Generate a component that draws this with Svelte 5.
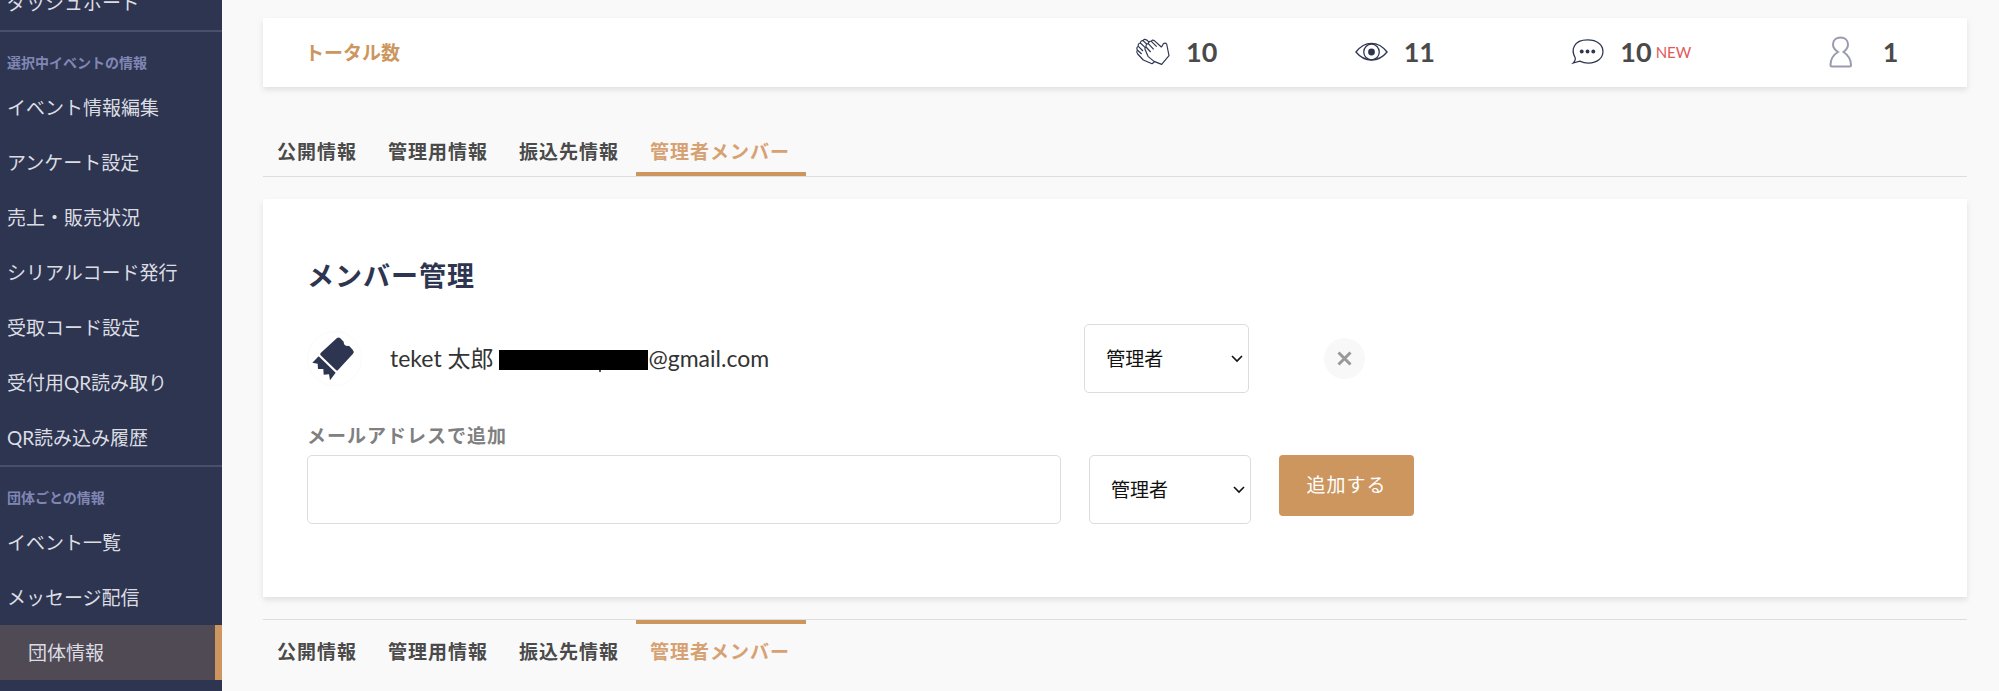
<script>
  const eventLinks = [
    "イベント情報編集",
    "アンケート設定",
    "売上・販売状況",
    "シリアルコード発行",
    "受取コード設定",
    "受付用QR読み取り",
    "QR読み込み履歴",
  ];

  const groupLinks = ["イベント一覧", "メッセージ配信", "団体情報"];

  const tabs = ["公開情報", "管理用情報", "振込先情報", "管理者メンバー"];

  const roles = ["管理者", "スタッフ"];

  let currentTab = $state("管理者メンバー");
  let memberRole = $state("管理者");
  let newRole = $state("管理者");
  let email = $state("");
</script>

{#snippet tabBar(position)}
  <nav class="tabs {position}">
    {#each tabs as tab}
      <button
        type="button"
        class="tab"
        class:active={tab === currentTab}
        onclick={() => (currentTab = tab)}>{tab}</button
      >
    {/each}
  </nav>
{/snippet}

{#snippet chevron()}
  <svg class="chevron" width="12" height="8" viewBox="0 0 12 8" aria-hidden="true">
    <path d="M1 1l5 5 5-5" />
  </svg>
{/snippet}

<div class="page">
  <aside class="sidebar">
    <a class="link" href="#dashboard">ダッシュボード</a>
    <section>
      <h2>選択中イベントの情報</h2>
      {#each eventLinks as link}
        <a class="link" href="#event">{link}</a>
      {/each}
    </section>
    <section>
      <h2>団体ごとの情報</h2>
      {#each groupLinks as link}
        <a class="link" class:selected={link === "団体情報"} href="#group">{link}</a>
      {/each}
    </section>
  </aside>

  <main>
    <div class="card totals">
      <p class="totals-title">トータル数</p>
      <div class="stats">
        <div class="stat">
          <svg width="34" height="28" viewBox="0 0 102 84" aria-hidden="true">
            <g class="line">
              <path d="M54 70L77 79L99 53L92 18Q88 13 82 17Q80 24 76 27L55 8Q49 4 46 10Q38 8 37 17Q29 17 30 27Q24 31 29 38L36 55Z" />
              <path d="M46 10L62 26M37 17L53 34M30 27L44 42" />
              <path d="M55 72L48 77L22 66L5 48Q0 42 4 36Q0 29 7 25Q5 16 13 15Q14 7 21 8Q25 1 32 6L40 13" />
              <path d="M4 36L17 48M7 25L21 39M13 15L28 29M21 8L32 18" />
            </g>
          </svg>
          <strong>10</strong>
        </div>
        <div class="stat">
          <svg width="33" height="20" viewBox="0 0 34 20" aria-hidden="true">
            <path class="line" d="M1 10C10-2 24-2 33 10C24 21 10 21 1 10Z" />
            <circle class="line" cx="17" cy="10" r="8" />
            <circle class="fill" cx="17" cy="10" r="3.5" />
          </svg>
          <strong>11</strong>
        </div>
        <div class="stat">
          <svg width="32" height="27" viewBox="0 0 33 28" aria-hidden="true">
            <path class="line" d="M3 20C-1 13 1 2 16 2C26 2 32 7 32 14C32 21 26 26 17 26C13 26 10 25 8 24L1 26C3 24 4 22 3 20Z" />
            <circle class="fill" cx="10" cy="14" r="2" />
            <circle class="fill" cx="16" cy="14" r="2" />
            <circle class="fill" cx="22" cy="14" r="2" />
          </svg>
          <strong>10</strong><span class="new">NEW</span>
        </div>
        <div class="stat">
          <svg width="38" height="32" viewBox="0 0 38 32" aria-hidden="true">
            <path class="person" d="M9 16C6 14 4 12 4 8.500C4 4 7.500 1.500 11.500 1.500C15.500 1.500 19 4 19 8.500C19 12 17 14 14.500 16C19 19 22 23 22 29Q22 30.500 20.500 30.500H3Q1.500 30.500 1.500 29C1.500 23 4 19 9 16Z" />
          </svg>
          <strong>1</strong>
        </div>
      </div>
    </div>

    {@render tabBar("top")}

    <div class="card members">
      <h1>メンバー管理</h1>
      <div class="member">
        <div class="identity">
          <div class="avatar">
            <svg width="43" height="43" viewBox="0 0 129 129" aria-hidden="true">
              <path d="M72 3Q77-1 82 4L92 14Q92 20 95 24Q101 28 108 26L119 38Q125 44 120 50L75 99Q72 102 69 99L23 55Q20 52 23 48Z" />
              <path d="M17 58L68 107L51 130L48 112L32 113L31 96L15 96L14 80L-2 77Z" />
            </svg>
          </div>
          <p class="name">teket 太郎 <span class="masked"></span>@gmail.com</p>
        </div>
        <div class="select member-role">
          <select aria-label="権限" bind:value={memberRole}>
            {#each roles as role}
              <option>{role}</option>
            {/each}
          </select>
          {@render chevron()}
        </div>
        <button type="button" class="remove" aria-label="削除">
          <svg width="15" height="15" viewBox="0 0 15 15" aria-hidden="true">
            <path d="M1.500 1.500l12 12M13.500 1.500l-12 12" />
          </svg>
        </button>
      </div>

      <form onsubmit={(e) => e.preventDefault()}>
        <label for="email">メールアドレスで追加</label>
        <div class="fields">
          <input id="email" type="email" bind:value={email} />
          <div class="select">
            <select aria-label="追加する権限" bind:value={newRole}>
              {#each roles as role}
                <option>{role}</option>
              {/each}
            </select>
            {@render chevron()}
          </div>
          <button type="submit" class="add">追加する</button>
        </div>
      </form>
    </div>

    {@render tabBar("bottom")}
  </main>
</div>

<style>
  :global(body) {
    margin: 0;
    background: #f9f9f9;
  }

  .page {
    --navy: #2e3550;
    --gold: #cc965e;
    display: flex;
    height: 100vh;
    overflow: hidden;
    font-family: Lato, "Noto Sans CJK JP", sans-serif;
    font-size: 19px;
    color: #4a4a4a;
  }

  .page * {
    box-sizing: border-box;
  }

  h1,
  h2,
  p {
    margin: 0;
  }

  button,
  input,
  select {
    margin: 0;
    font: inherit;
  }

  svg {
    display: block;
    flex-shrink: 0;
    overflow: visible;
  }

  /* sidebar */
  .sidebar {
    flex: 0 0 222px;
    margin-top: -25px;
    background: var(--navy);
  }

  .sidebar section {
    border-top: 2px solid #4a5069;
  }

  .sidebar h2 {
    height: 48px;
    padding: 0 7px;
    line-height: 62px;
    font-size: 14px;
    font-weight: 700;
    color: #8087b5;
  }

  .link {
    display: block;
    height: 55px;
    padding: 0 7px;
    line-height: 55px;
    color: #dcdde3;
    text-decoration: none;
    white-space: nowrap;
  }

  .link.selected {
    padding-left: 28px;
    border-right: 7px solid var(--gold);
    background: #504a55;
  }

  /* content */
  main {
    flex: 1;
    min-width: 0;
    padding: 18px 32px 0 41px;
  }

  .card {
    background: #fff;
    box-shadow: 0 3px 6px rgba(0, 0, 0, 0.1);
  }

  .totals {
    display: flex;
    align-items: center;
    justify-content: space-between;
    height: 69px;
    padding-bottom: 2px;
  }

  .totals-title {
    padding-left: 42px;
    font-weight: 700;
    color: var(--gold);
  }

  .stats {
    display: flex;
    justify-content: space-around;
    flex: 0 0 52.8%;
  }

  .stat {
    display: flex;
    align-items: center;
    color: #4a4a4a;
  }

  .stat strong {
    padding-left: 16px;
    font-size: 27px;
    line-height: 32px;
  }

  .new {
    padding-left: 4px;
    font-size: 15px;
    color: #e05a5a;
  }

  .line {
    fill: none;
    stroke: var(--navy);
    stroke-width: 1.3;
  }

  g.line {
    stroke-width: 3.5;
    stroke-linejoin: round;
  }

  .fill {
    fill: var(--navy);
  }

  .person {
    fill: none;
    stroke: #9a9cae;
    stroke-width: 2;
  }

  /* tabs */
  .tabs {
    display: flex;
    gap: 1px;
  }

  .tabs.top {
    margin: 41px 0 22px;
    border-bottom: 1px solid #dedede;
  }

  .tabs.bottom {
    margin-top: 22px;
    border-top: 1px solid #dedede;
  }

  .tab {
    padding: 0 16px 0 14px;
    border: 0 solid transparent;
    background: none;
    line-height: 40px;
    letter-spacing: 1px;
    font-weight: 700;
    color: #4a4a4a;
  }

  .top .tab {
    padding-top: 4px;
    border-bottom-width: 4px;
  }

  .bottom .tab {
    padding-top: 8px;
    border-top-width: 4px;
  }

  .tab.active {
    border-color: var(--gold);
    color: #d6a173;
  }

  /* members */
  .members {
    padding: 56px 44px 73px;
  }

  h1 {
    margin-bottom: 27px;
    line-height: 42px;
    font-size: 27px;
    font-weight: 700;
    letter-spacing: 1px;
    color: var(--navy);
  }

  .member {
    display: flex;
    align-items: center;
  }

  .identity {
    display: flex;
    align-items: center;
    flex: 0 0 48.1%;
    gap: 28px;
  }

  .avatar {
    display: flex;
    align-items: center;
    justify-content: center;
    width: 55px;
    height: 55px;
    border: 1px solid #fafafa;
    border-radius: 50%;
    fill: var(--navy);
  }

  .name {
    padding-bottom: 2px;
    font-size: 23px;
    line-height: 32px;
    color: #333;
    white-space: nowrap;
  }

  .masked {
    position: relative;
    display: inline-block;
    width: 149px;
    height: 20px;
    background: #000;
    vertical-align: -3px;
  }

  /* descender that the mask leaves uncovered */
  .masked::after {
    content: "";
    position: absolute;
    top: 100%;
    left: 100px;
    width: 2px;
    height: 2px;
    background: #555;
  }

  .select {
    position: relative;
    flex: 0 0 162px;
  }

  .member-role {
    flex-basis: 165px;
  }

  select,
  input {
    height: 69px;
    border: 1px solid #dcdcdc;
    border-radius: 5px;
    background: #fff;
  }

  select {
    display: block;
    width: 100%;
    padding: 0 21px;
    appearance: none;
    color: #111;
  }

  .chevron {
    position: absolute;
    top: 31px;
    right: 6px;
    fill: none;
    stroke: #111;
    stroke-width: 1.6;
    pointer-events: none;
  }

  .remove {
    display: flex;
    align-items: center;
    justify-content: center;
    width: 41px;
    height: 41px;
    margin-left: 75px;
    padding: 0;
    border: 0;
    border-radius: 50%;
    background: #f8f8f8;
    stroke: #999;
    stroke-width: 3;
  }

  label {
    display: block;
    margin-top: 26px;
    padding-bottom: 2px;
    line-height: 34px;
    font-weight: 700;
    letter-spacing: 1px;
    color: #808080;
  }

  .fields {
    display: flex;
    align-items: flex-start;
    gap: 28px;
  }

  input {
    flex: 0 1 754px;
    min-width: 0;
    padding: 0 20px;
  }

  .add {
    flex: 0 0 135px;
    height: 61px;
    padding: 0 0 4px;
    border: 0;
    border-radius: 4px;
    background: var(--gold);
    letter-spacing: 1px;
    color: #fff;
  }
</style>
